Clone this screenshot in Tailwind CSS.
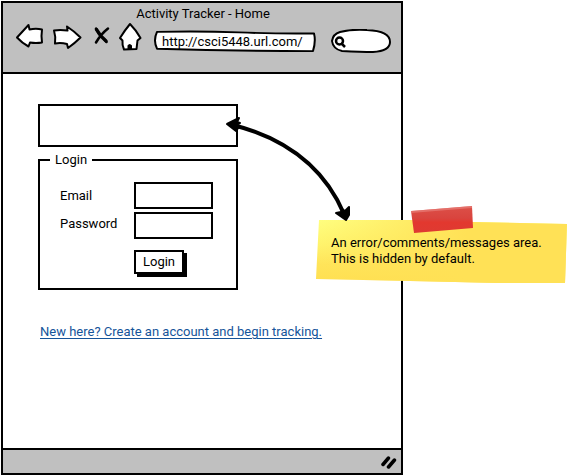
<!DOCTYPE html>
<html lang="en">
<head>
<meta charset="utf-8">
<meta name="viewport" content="width=device-width, initial-scale=1">
<title>Activity Tracker - Home</title>
<script src="https://cdn.jsdelivr.net/npm/@tailwindcss/browser@4"></script>
</head>
<body class="relative flex min-h-screen bg-white pt-px pr-[165px] pb-px pl-px font-[Roboto,'Liberation_Sans',sans-serif] text-[13px] leading-4 text-black">
  <div class="flex flex-1 flex-col border-2 border-black">
    <header class="h-[71px] border-b-2 border-black bg-[#c0c0c0] pt-[3px] pr-2.5 pl-3">
      <h1 class="text-center">Activity Tracker - Home</h1>
      <nav class="flex items-start" aria-label="Browser">
        <button class="mr-2 shrink-0" aria-label="Back">
          <svg class="block" width="29" height="30" viewBox="15 22 29 30" fill="#fff" stroke="#000" stroke-width="2" stroke-linejoin="round"><path d="M17 37.500L28.500 25L29.500 29.500Q36 28 42 29.500Q41 36 42 42.500Q36 43.500 30 42.500L28.500 46.500Q22 43 17 37.500Z"/></svg>
        </button>
        <button class="mr-[11px] shrink-0" aria-label="Forward">
          <svg class="block" width="30" height="30" viewBox="52 22 30 30" fill="#fff" stroke="#000" stroke-width="2" stroke-linejoin="round"><path d="M54 30.500Q60 29.500 67.500 30.500L67 26.500Q74 31 80.500 37.500Q75 43 68 48L67 44Q61 42.500 55 43.500Q56 37 54 30.500Z"/></svg>
        </button>
        <button class="mr-2 shrink-0" aria-label="Stop">
          <svg class="block" width="17" height="30" viewBox="93 22 17 30" fill="none" stroke="#000" stroke-linecap="round"><path stroke-width="3.500" d="M96.500 29.500Q100 36 106 41"/><path stroke-width="2.500" d="M108 28.500Q101 34 96 42.500M96 28.500L99 34M104 39L106.500 42"/></svg>
        </button>
        <button class="mr-3 shrink-0" aria-label="Home">
          <svg class="block" width="24" height="30" viewBox="118 22 24 30" fill="#fff" stroke="#000" stroke-width="2" stroke-linejoin="round"><path d="M130 24Q125 30 120 38L122.500 40.500Q122 45 124 49.500L136.500 49L137.500 40.500L140.500 38Q136 30 130 24Z"/><path fill="#000" stroke="none" d="M127.500 49.500V45.500Q129.500 42.500 132 45.500V49.500Z"/></svg>
        </button>
        <div class="relative mt-2 mr-[15px] h-[23px] min-w-0 flex-1">
          <svg class="absolute inset-0 h-full w-full" viewBox="0 0 162 24" preserveAspectRatio="none" fill="#fff" stroke="#000" stroke-width="2" stroke-linejoin="round" aria-hidden="true"><path d="M3 2Q45 1 85 2.500Q125 4 160 3.500Q162 12 159 22Q80 22 3 19.500Q-1 11 3 2Z"/></svg>
          <input class="relative block h-[22px] w-full bg-transparent pl-2 outline-none" type="text" aria-label="Address" value="http://csci5448.url.com/">
        </div>
        <div class="relative mt-[7px] h-6 w-[60px] shrink-0">
          <svg class="absolute inset-0 h-full w-full" viewBox="0 0 60 24" fill="#fff" stroke="#000" stroke-width="2" aria-hidden="true"><path d="M9 3Q21 0 36 1Q59 2 59 13Q59 22 42 23Q30 23 11 22Q2 20 1 12Q2 5 9 3Z"/><circle cx="8.500" cy="12" r="3.500" stroke-width="2.500"/><path d="M10 14L14 18" stroke-width="2.500"/></svg>
          <input class="relative block h-full w-full bg-transparent pr-2 pl-5 outline-none" type="search" aria-label="Search">
        </div>
      </nav>
    </header>

    <main class="flex-1 px-[35px] pt-[30px]">
      <div class="h-[43px] w-[200px] border-2 border-black" role="status"></div>
      <form class="mt-[5px] w-[200px]">
        <fieldset class="h-[138px] border-2 border-black px-5">
          <legend class="-ml-2.5 px-[5px]">Login</legend>
          <div class="mt-3.5 grid grid-cols-[74px_79px] items-center gap-y-[3px]">
            <label for="email">Email</label>
            <input class="h-[27px] w-full border-2 border-black px-1 outline-none" id="email" type="email">
            <label class="-mt-1" for="password">Password</label>
            <input class="h-[27px] w-full border-2 border-black px-1 outline-none" id="password" type="password">
            <button class="col-start-2 mt-2 h-6 w-[50px] border-2 border-black bg-white leading-4 shadow-[3px_3px_0_#000]" type="button">Login</button>
          </div>
        </fieldset>
      </form>
      <a class="mt-[34px] ml-0.5 inline-block whitespace-nowrap text-[#15549a] underline underline-offset-2" href="#signup">New here? Create an account and begin tracking.</a>
    </main>

    <footer class="flex h-[25px] items-center justify-end border-t-2 border-black bg-[#c0c0c0] pr-1">
      <svg width="16" height="14" viewBox="0 0 16 14" stroke="#000" stroke-width="3.500" stroke-linecap="round" aria-hidden="true"><path d="M2 9.500L7.500 3M7.500 12L13.500 5"/></svg>
    </footer>
  </div>

  <aside class="absolute top-[205px] left-[315px] w-[253px] pt-[30px] pr-2 pb-5 pl-4">
    <svg class="absolute inset-0" width="253" height="80" viewBox="315 205 253 80" aria-hidden="true">
      <defs>
        <linearGradient id="paper" x1="0" y1="0" x2="0" y2="1"><stop offset="0" stop-color="#ffff80"/><stop offset=".4" stop-color="#fff36c"/><stop offset=".7" stop-color="#ffe45a"/><stop offset="1" stop-color="#ffdf50"/></linearGradient>
        <linearGradient id="warm" x1="0" y1="0" x2="1" y2="0"><stop offset="0" stop-color="#ffe156" stop-opacity="0"/><stop offset=".6" stop-color="#ffe156"/></linearGradient>
        <linearGradient id="tape" x1="0" y1="0" x2="0" y2="1"><stop offset="0" stop-color="#dc5048"/><stop offset=".45" stop-color="#d9443e"/><stop offset=".6" stop-color="#e3382f"/><stop offset="1" stop-color="#de3a32"/></linearGradient>
      </defs>
      <path fill="url(#paper)" d="M319 220L413 220L472 222L567 224L565 283L500 283L410 281L316 279Z"/>
      <path fill="url(#warm)" d="M319 220L413 220L472 222L567 224L565 283L500 283L410 281L316 279Z"/>
      <path fill="url(#tape)" d="M411 211L472 206L473 228L414 233Z"/>
      <path fill="#e98680" opacity=".6" d="M411 211L472 206V208L411 213Z"/>
    </svg>
    <p class="relative whitespace-nowrap">An error/comments/messages area.<br>This is hidden by default.</p>
  </aside>

  <svg class="pointer-events-none absolute top-[110px] left-[220px]" width="135" height="115" viewBox="220 110 135 115" stroke="#000" stroke-linejoin="round" aria-hidden="true">
    <path fill="none" stroke-width="4" d="M233 125Q315 146 344 214"/>
    <path stroke-width="2" d="M227 124L239 118L237 122L240 123L236 125L239 127L236 131Z"/>
    <path stroke-width="2" d="M346 220L336 213L341 212L342 209L345 211L349 207L349 215Z"/>
  </svg>
</body>
</html>
